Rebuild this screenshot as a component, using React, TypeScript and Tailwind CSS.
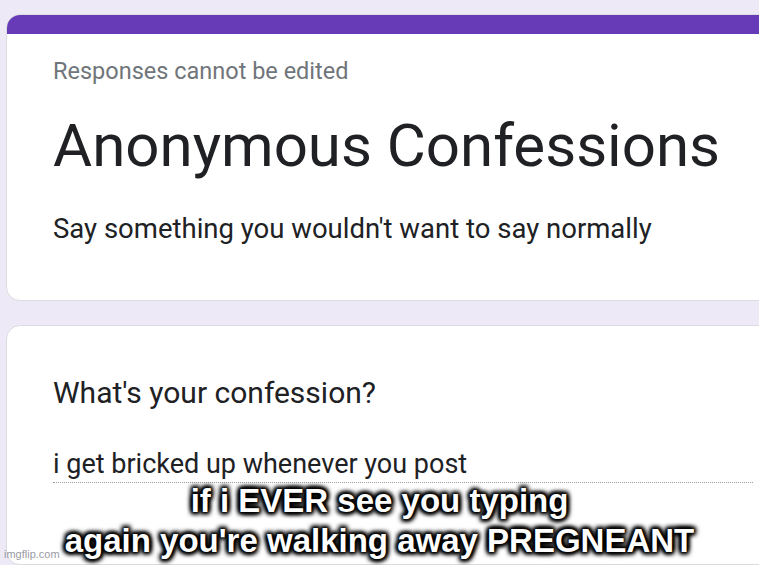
import React from "react";

const roboto = { fontFamily: "Roboto, 'Liberation Sans', sans-serif" };

export default function App() {
  return (
    <div className="relative h-[565px] w-[759px] overflow-hidden bg-[#ede9f7]" style={roboto}>
      <div className="flex w-[800px] flex-col gap-[24px] pl-[6px] pt-[14px]">
        {/* header card */}
        <div className="h-[287px] overflow-hidden rounded-[14px] border border-[#dadce0] bg-white">
          <div className="h-[19px] bg-[#673ab7]" />
          <div className="px-[46px] pt-[22px]">
            <div className="text-[23.5px] leading-[30px] text-[#70757a]">Responses cannot be edited</div>
            <div className="mt-[25px] text-[60px] leading-[70px] text-[#202124]">Anonymous Confessions</div>
            <div className="mt-[31px] text-[27.5px] leading-[34px] text-[#202124]">
              Say something you wouldn't want to say normally
            </div>
          </div>
        </div>

        {/* question card */}
        <div className="h-[240px] rounded-[14px] border border-[#dadce0] bg-white px-[46px] pt-[48px]">
          <div className="text-[30px] leading-[38px] text-[#202124]">What's your confession?</div>
          <div className="mt-[35px] border-b border-dotted border-[#9aa0a6] pb-[1px] text-[27px] leading-[34px] text-[#202124]">
            i get bricked up whenever you post
          </div>
        </div>
      </div>

      {/* meme caption */}
      <div
        className="absolute left-0 top-[481px] w-[759px] text-center text-[33px] font-bold leading-[40px] text-white"
        style={{
          fontFamily: "'Liberation Sans', Arial, sans-serif",
          textShadow:
            "0 0 2px #000, 0 0 3px #000, 0 0 5px #000, 0 0 7px #000, 2px 2px 4px #000, -2px -2px 4px #000, 2px -2px 4px #000, -2px 2px 4px #000",
        }}
      >
        <div>if i EVER see you typing</div>
        <div>again you're walking away PREGNEANT</div>
      </div>

      <div
        className="absolute bottom-[5px] left-[4px] text-[11px] leading-[12px] text-[#9a9aa4]"
        style={{ fontFamily: "'Liberation Sans', Arial, sans-serif" }}
      >
        imgflip.com
      </div>
    </div>
  );
}
